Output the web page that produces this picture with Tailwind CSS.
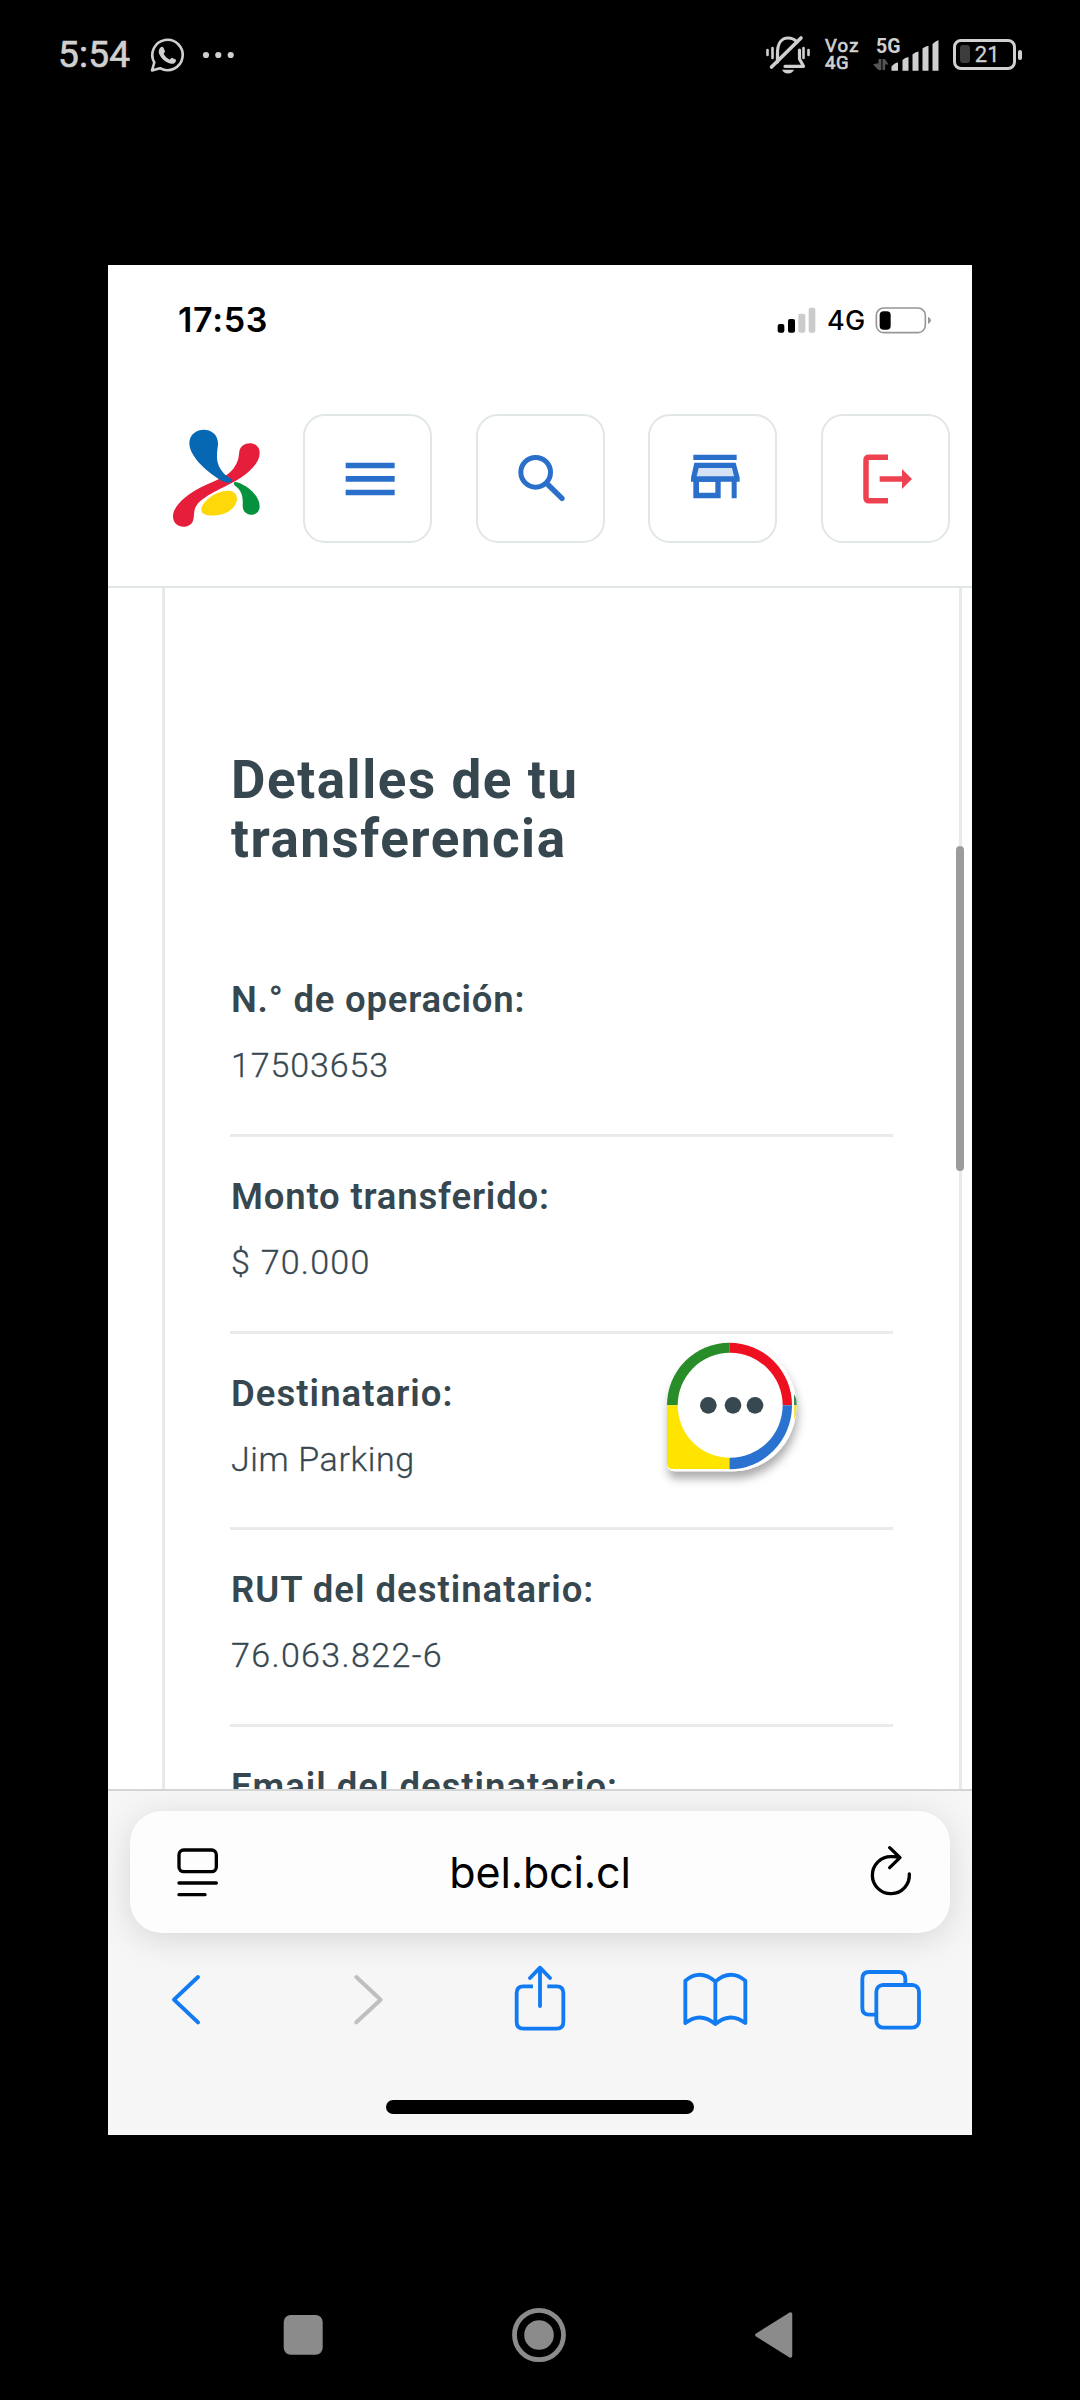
<!DOCTYPE html>
<html lang="es">
<head>
<meta charset="utf-8">
<title>Detalles de tu transferencia</title>
<script src="https://cdn.jsdelivr.net/npm/@tailwindcss/browser@4"></script>
</head>
<body class="bg-black">
<div class="flex h-[2400px] w-[1080px] flex-col overflow-hidden bg-black font-['Roboto',sans-serif]">

  <!-- Android status bar -->
  <div class="flex h-[109px] shrink-0 items-center pl-[58px] pr-[58px] text-[#d0d0d0]">
    <span class="text-[37px] leading-[44px] tracking-[0.2px] pt-[1px] [-webkit-text-stroke:0.7px_currentColor]">5:54</span>
    <svg class="ml-[18px] h-[40px] w-[90px]" viewBox="148 34 90 40" fill="none">
      <path d="M152 69.5 L154.3 61.5 A15.2 15.2 0 1 1 160 67.2 Z" stroke="#d0d0d0" stroke-width="2.6" stroke-linejoin="round"/>
      <path d="M160.5 46.5c1.5-1.2 2.600-.7 3 .3l1.400 3.300c.3 1-.8 2-1.300 2.700 1.300 2.700 3.300 4.500 6.200 5.900.8-.8 1.500-2.100 2.500-1.800l3.300 1.600c.8.5.3 2.300-.7 3.200-2 1.800-4.700 1.200-7 .1-3.700-1.700-6.700-4.600-8.500-8.300-1-2.400-1-5.300 1.100-7z" fill="#d0d0d0"/>
      <circle cx="206" cy="54" r="3.100" fill="#d0d0d0"/><circle cx="218.300" cy="54" r="3.100" fill="#d0d0d0"/><circle cx="230.700" cy="54" r="3.100" fill="#d0d0d0"/>
    </svg>
    <svg class="ml-auto h-[40px] w-[46px]" viewBox="765 35 46 40" fill="none" stroke="#d0d0d0" stroke-linecap="round">
      <path d="M777.500 62V53C777.500 43 782 38 788 38Q793.500 38 797 42" stroke-width="3.200"/>
      <path d="M799.500 50V59L803.500 66.300H785" stroke-width="3.200" stroke-linejoin="round"/>
      <path d="M771.500 67L801 38" stroke-width="3.600"/>
      <path d="M767.500 50V55M772.500 48V58M803.500 48V58M808.500 50V55" stroke-width="2.600"/>
      <path d="M782 69.800H794Q792.500 73.500 788 73.500T782 69.800Z" fill="#d0d0d0" stroke="none"/>
    </svg>
    <div class="ml-[14px] flex w-[36px] flex-col text-[18.500px] leading-[17px] tracking-[1.200px] [-webkit-text-stroke:0.7px_currentColor]">
      <span>Voz</span><span class="tracking-[0.600px]">4G</span>
    </div>
    <div class="ml-[12px] flex h-[34px] w-[68px] flex-col text-[19.500px] font-bold leading-[17px]">
      <span class="pl-[3px]">5G</span>
      <svg class="-mt-[16px] h-[34px] w-[68px] shrink-0" viewBox="873 38 68 34" fill="#d0d0d0">
        <path d="M878.500 58v11h2.800v-11zM873 63.500l5.500 5.500v-7zM882.500 58v11h2.600v-11zM885 58l3.500 5.500H885z" fill="#555"/>
        <path d="M891.500 69.700V65.500Q895 61.500 898 61.500V69.700zM902.500 69.700V59Q905 56.500 908.500 56V69.700zM912.500 69.700V53.500Q915 51 918.500 50.500V69.700zM922.500 69.700V47.500Q925 45.500 928.500 44.800V69.700zM932.500 69.700V43Q935 40.500 938.500 39V69.700z"/>
      </svg>
    </div>
    <div class="ml-[12px] flex items-center">
      <div class="relative flex h-[31px] w-[63px] items-center justify-end rounded-[8px] border-[3px] border-[#d0d0d0] pr-[13.500px]">
        <div class="absolute left-[4px] top-[3px] h-[18px] w-[10px] rounded-[3px] bg-[#3c3c3c]"></div>
        <span class="relative text-[22px] leading-[24px] [-webkit-text-stroke:0.3px_currentColor]">21</span>
      </div>
      <div class="ml-[2px] h-[10px] w-[4px] rounded-[2px] bg-[#d0d0d0]"></div>
    </div>
  </div>

  <!-- Phone capture -->
  <div class="relative mx-[108px] mt-[156px] flex h-[1870px] shrink-0 flex-col overflow-hidden bg-white">

    <!-- iOS status bar -->
    <div class="flex h-[110px] shrink-0 items-center pl-[70px] pr-[40px] font-['Inter',sans-serif] text-black">
      <span class="text-[34px] font-semibold leading-[40px] tracking-[0.700px]">17:53</span>
      <svg class="ml-auto h-[27px] w-[40px]" viewBox="711 168 120 81">
        <rect x="713" y="219" width="20" height="26" rx="6"/><rect x="744" y="204" width="21" height="41" rx="6"/>
        <rect x="775" y="188" width="21" height="57" rx="6" fill="#cbcbcb"/><rect x="806" y="170" width="20" height="75" rx="6" fill="#cbcbcb"/>
      </svg>
      <span class="ml-[10px] w-[39px] pt-[1px] text-[27px] font-medium leading-[30px] tracking-[0.300px]">4G</span>
      <svg class="ml-[9px] h-[27px] w-[57px]" viewBox="1006 168 171 81">
        <rect x="1010" y="171" width="147" height="74" rx="22" fill="none" stroke="#979797" stroke-width="5"/>
        <rect x="1020" y="181" width="33" height="55" rx="12"/>
        <path d="M1165 197Q1174 202 1174 208T1165 219Z" fill="#979797"/>
      </svg>
    </div>

    <!-- Site header -->
    <header class="flex h-[213px] shrink-0 items-start border-b-[2px] border-[#e0e5e5] pl-[64px] pt-[38.500px]">
      <svg class="mt-[13.500px] h-[101.700px] w-[90px]" viewBox="215 530 270 305">
        <path fill="#e61e3c" d="M478 607C478 640 442 672 400 695C345 724 292 745 283 778C280 788 282 800 278 811C268 838 218 836 218 798C218 765 262 730 305 709C345 689 378 682 399 655C415 634 415 620 417 603C423 569 478 571 478 607Z"/>
        <path fill="#0668b3" d="M267 579C267 525 353 524 353 579C353 597 342 628 361 657C372 675 388 683 396 688C394 698 381 700 367 693C325 670 267 620 267 579Z"/>
        <path fill="#06913f" d="M405 695C433 699 478 733 478 768C478 802 427 802 427 766C429 737 423 719 404 706C399 702 400 695 405 695Z"/>
        <path fill="#ffd80a" d="M385 721C418 722 418 762 387 782C362 799 303 803 303 778C303 757 343 720 385 721Z"/>
      </svg>
      <nav class="ml-[41px] flex gap-[43.700px]">
        <button class="h-[129px] w-[129px] rounded-[22px] border-[2px] border-[#e1e6e6]" aria-label="Menú">
          <svg class="h-[125px] w-[125px]" viewBox="615 495 375 375" fill="#2a6fc9"><path d="M737 635h147v17H737zM737 675h147v17H737zM737 716h147v17H737z"/></svg>
        </button>
        <button class="h-[129px] w-[129px] rounded-[22px] border-[2px] border-[#e1e6e6]" aria-label="Buscar">
          <svg class="h-[125px] w-[125px]" viewBox="1135 495 375 375" fill="none" stroke="#2a6fc9"><circle cx="1308" cy="664" r="44.500" stroke-width="15"/><path d="M1346 702L1387 742" stroke-width="16" stroke-linecap="round"/></svg>
        </button>
        <button class="h-[129px] w-[129px] rounded-[22px] border-[2px] border-[#e1e6e6]" aria-label="Tienda">
          <svg class="h-[125px] w-[125px]" viewBox="331 495 375 375" fill="#2a6fc9">
            <path d="M461 611h130v16H461zM464 635H588L600 680V692H454V680Z"/>
            <path fill="#d5e1f5" d="M477 651H577L583 676H471Z"/>
            <path fill-rule="evenodd" d="M461 690H543V742H461ZM478 692V725H527V692ZM576 690H591V742H576Z"/>
          </svg>
        </button>
        <button class="h-[129px] w-[129px] rounded-[22px] border-[2px] border-[#e1e6e6]" aria-label="Salir">
          <svg class="h-[125px] w-[125px]" viewBox="850 495 375 375" fill="none" stroke="#ee4250" stroke-width="16.500"><path d="M1045 619H988Q979 619 979 628V740Q979 749 988 749H1045M1020 684H1092"/><path d="M1087 654L1117 684L1087 714Z" fill="#ee4250" stroke="none"/></svg>
        </button>
      </nav>
    </header>

    <!-- Transfer details -->
    <main class="relative h-[1201px] shrink-0 overflow-hidden">
      <section class="ml-[54px] mr-[10px] h-[1400px] border-x-[3px] border-[#e6eaea] pl-[65px] pr-[66px] pt-[163px] text-[#37474f]">
        <h1 class="pl-[1px] text-[53px] font-bold leading-[59px] tracking-[1.560px]">Detalles de tu<br><span class="tracking-[1.500px]">transferencia</span></h1>
        <dl class="pt-[71px]">
          <div class="h-[196.800px] border-b-[3px] border-[#e9ebeb] pt-[38px]">
            <dt class="pl-[1px] text-[36.500px] font-semibold leading-[44px] tracking-[0.770px]">N.° de operación:</dt>
            <dd class="pl-[1px] pt-[21px] text-[34px] font-light leading-[44px] tracking-[0.900px] [-webkit-text-stroke:0.3px_currentColor]">17503653</dd>
          </div>
          <div class="h-[196.800px] border-b-[3px] border-[#e9ebeb] pt-[38px]">
            <dt class="pl-[1px] text-[36.500px] font-semibold leading-[44px] tracking-[0.820px]">Monto transferido:</dt>
            <dd class="pl-[1px] pt-[21px] text-[34px] font-light leading-[44px] tracking-[1.250px] [-webkit-text-stroke:0.3px_currentColor]">$ 70.000</dd>
          </div>
          <div class="h-[196.800px] border-b-[3px] border-[#e9ebeb] pt-[38px]">
            <dt class="pl-[1px] text-[36.500px] font-semibold leading-[44px] tracking-[1.040px]">Destinatario:</dt>
            <dd class="pl-[1px] pt-[21px] text-[34px] font-light leading-[44px] tracking-[0.600px] [-webkit-text-stroke:0.3px_currentColor]">Jim Parking</dd>
          </div>
          <div class="h-[196.800px] border-b-[3px] border-[#e9ebeb] pt-[38px]">
            <dt class="pl-[1px] text-[36.500px] font-semibold leading-[44px] tracking-[1px]">RUT del destinatario:</dt>
            <dd class="pl-[1px] pt-[21px] text-[34px] font-light leading-[44px] tracking-[1.350px] [-webkit-text-stroke:0.3px_currentColor]">76.063.822-6</dd>
          </div>
          <div class="pt-[38px]">
            <dt class="pl-[1px] text-[36.500px] font-semibold leading-[44px] tracking-[0.980px]">Email del destinatario:</dt>
          </div>
        </dl>
      </section>
      <!-- Scroll thumb -->
      <div class="absolute right-[8px] top-[258px] h-[325px] w-[8px] rounded-full bg-[#9c9c9c]"></div>
      <!-- Chat bubble -->
      <svg class="absolute left-[552px] top-[749px] h-[160px] w-[150px] overflow-visible" viewBox="60 50 450 480">
        <defs><filter id="s" x="-20%" y="-20%" width="150%" height="150%"><feDropShadow dx="4" dy="22" stdDeviation="14" flood-color="#000" flood-opacity=".33"/></filter></defs>
        <path filter="url(#s)" fill="#fff" d="M81 258A194 194 0 1 1 275 453H105Q81 453 81 429Z"/>
        <path d="M462 222Q470 232 470 255H462Z" fill="#3c8c4c"/><path d="M462 255H470Q470 280 464 296H462Z" fill="#f0e050"/>
        <path fill="#288c28" d="M81 255A187 188 0 0 1 268 67V255Z"/>
        <path fill="#ee0f20" d="M268 67A188 188 0 0 1 456 255H268Z"/>
        <path fill="#2a72cf" d="M456 255A188 192 0 0 1 268 447V255Z"/>
        <path fill="#ffe400" d="M81 255H268V446H99Q81 446 81 428Z"/>
        <circle cx="270.500" cy="255" r="157.500" fill="#fff"/>
        <g fill="#374850"><circle cx="205" cy="255" r="25"/><circle cx="279" cy="255" r="25"/><circle cx="345" cy="255" r="25"/></g>
      </svg>
    </main>

    <!-- Browser toolbar -->
    <footer class="flex grow flex-col border-t-[2px] border-[#d4d5d5] bg-[#f6f6f6] px-[22px] pt-[20px]">
      <div class="flex h-[122px] shrink-0 items-center rounded-[32px] bg-[#fdfdfd] px-[44px] font-['Inter',sans-serif] shadow-[0_6px_34px_rgba(0,0,0,0.130)]">
        <svg class="h-[54px] w-[48px]" viewBox="222 226 144 162" fill="none" stroke="#000" stroke-width="10" stroke-linecap="round"><rect x="237" y="241" width="112" height="65" rx="14"/><path d="M237 340H349M237 375H315"/></svg>
        <span class="grow text-center text-[43px] leading-[52px] tracking-[-0.150px] text-black">bel.bci.cl</span>
        <svg class="h-[54px] w-[48px] overflow-visible" viewBox="954 224 144 162" fill="none" stroke="#000" stroke-width="10" stroke-linecap="round" stroke-linejoin="round"><path d="M1108 311A55.500 55.500 0 1 1 1053 259Q1066 258 1079 262M1049 232L1080 262L1049 292"/></svg>
      </div>
      <div class="mt-[30px] flex h-[70px] shrink-0 justify-between px-[24px]">
        <svg class="h-[70px] w-[64px]" viewBox="162 580 192 210" fill="none" stroke="#127bf2" stroke-width="12" stroke-linecap="round" stroke-linejoin="round"><path d="M294 622L222 690L294 758"/></svg>
        <svg class="h-[70px] w-[64px]" viewBox="693 580 192 210" fill="none" stroke="#bfbfbf" stroke-width="12" stroke-linecap="round" stroke-linejoin="round"><path d="M769 622L842 690L769 758"/></svg>
        <svg class="h-[70px] w-[64px]" viewBox="1224 580 192 210" fill="none" stroke="#127bf2" stroke-width="11.500" stroke-linecap="round" stroke-linejoin="round"><path stroke-linecap="butt" d="M1299 650H1270Q1250 650 1250 670V757Q1250 777 1270 777H1370Q1390 777 1390 757V670Q1390 650 1370 650H1342"/><path d="M1320 709V594M1290 625L1320 594L1350 625"/></svg>
        <svg class="h-[70px] w-[64px] overflow-visible" viewBox="436 580 192 210" fill="none" stroke="#127bf2" stroke-width="11.500" stroke-linecap="round" stroke-linejoin="round"><path d="M527 636V763Q482 725 437 760V633Q482 596 527 636ZM527 636Q572 596 617 633V760Q572 725 527 763"/></svg>
        <svg class="h-[70px] w-[64px] overflow-visible" viewBox="966 580 192 210" fill="none" stroke="#127bf2" stroke-width="11.500"><path d="M1096 646V628Q1096 607 1076 607H987Q967 607 967 628V715Q967 735 987 735H1009"/><rect x="1009" y="646" width="128" height="128" rx="20"/></svg>
      </div>
      <div class="mx-auto mt-[67px] h-[14px] w-[308px] rounded-full bg-black"></div>
    </footer>
  </div>

  <!-- Android navigation bar -->
  <div class="mt-[145px] flex h-[110px] shrink-0 items-center pl-[283px] pr-[287px]">
    <svg class="h-[56px] w-[510px]" viewBox="283 2307 510 56" fill="#8b8b8b">
      <rect x="283.700" y="2315" width="39" height="39.700" rx="7"/>
      <ellipse cx="539" cy="2335" rx="24.500" ry="24.700" fill="none" stroke="#8b8b8b" stroke-width="4.800"/><circle cx="539" cy="2335" r="14.800"/>
      <path d="M757 2335L790.500 2314V2356Z" stroke="#8b8b8b" stroke-width="3.500" stroke-linejoin="round"/>
    </svg>
  </div>
</div>
</body>
</html>
